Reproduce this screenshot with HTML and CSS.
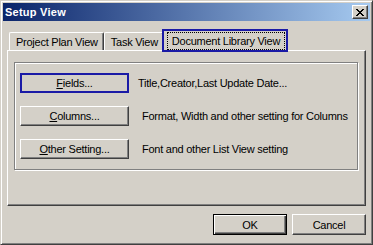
FILE: index.html
```html
<!DOCTYPE html>
<html>
  <head>
    <meta charset="UTF-8">
    <link rel="stylesheet" href="styles.css">
  </head>
  <body>
    <div class="window">
      <div class="titlebar">
        <span class="title">Setup View</span>
        <span class="close-btn">
          <svg width="8" height="7" viewBox="0 0 8 7" shape-rendering="crispEdges">
            <path fill="#000" d="M0 0h2v1h-2z M6 0h2v1h-2z M1 1h2v1h-2z M5 1h2v1h-2z M2 2h4v1h-4z M3 3h2v1h-2z M2 4h4v1h-4z M1 5h2v1h-2z M5 5h2v1h-2z M0 6h2v1h-2z M6 6h2v1h-2z"/>
          </svg>
        </span>
      </div>
      <div class="content">
        <ul class="tabs">
          <li class="tab">Project Plan View</li>
          <li class="tab">Task View</li>
          <li class="tab active"><span class="focus">Document Library View</span></li>
        </ul>
        <div class="panel">
          <div class="groupbox">
            <div class="row">
              <button class="button wide focused"><u>F</u>ields...</button>
              <span class="desc first">Title,Creator,Last Update Date...</span>
            </div>
            <div class="row">
              <button class="button wide"><u>C</u>olumns...</button>
              <span class="desc">Format, Width and other setting for Columns</span>
            </div>
            <div class="row">
              <button class="button wide"><u>O</u>ther Setting...</button>
              <span class="desc">Font and other List View setting</span>
            </div>
          </div>
        </div>
        <div class="footer">
          <button class="button small default">OK</button>
          <button class="button small">Cancel</button>
        </div>
      </div>
    </div>
  </body>
</html>
```

FILE: styles.css
```css
body {
  margin: 0;
  font-family: "Liberation Sans", Arial, sans-serif;
  font-size: 11px;
  letter-spacing: -0.25px;
  color: #000;
}

.window {
  width: 373px;
  height: 245px;
  box-sizing: border-box;
  background: #d4d0c8;
  border: 1px solid;
  border-color: #d4d0c8 #404040 #404040 #d4d0c8;
  box-shadow: inset 1px 1px #fff, inset -1px -1px #808080;
  padding: 2px;
  display: flex;
  flex-direction: column;
}

.titlebar {
  height: 18px;
  display: flex;
  align-items: center;
  justify-content: space-between;
  padding: 0 2px;
  background: linear-gradient(to right, #0a246a, #a6caf0);
}

.title {
  color: #fff;
  font-weight: bold;
  letter-spacing: 0.25px;
}

.close-btn {
  width: 16px;
  height: 14px;
  box-sizing: border-box;
  display: flex;
  align-items: center;
  justify-content: center;
  background: #d4d0c8;
  border: 1px solid;
  border-color: #fff #404040 #404040 #fff;
  box-shadow: inset -1px -1px #808080;
}

.content {
  padding: 8px 4px 0 4px;
}

.tabs {
  list-style-type: none;
  margin: 0;
  padding: 0 0 0 2px;
  height: 21px;
  display: flex;
  align-items: flex-end;
}

.tab {
  height: 18px;
  box-sizing: border-box;
  padding: 2px 5px 0 6px;
  line-height: 15px;
  border: 1px solid #fff;
  border-right-color: #404040;
  border-bottom: none;
  border-radius: 2px 2px 0 0;
  box-shadow: inset -1px 0 #808080;
  white-space: nowrap;
}

.tab.active {
  position: relative;
  z-index: 1;
  height: 23px;
  margin: 0 -2px -2px -2px;
  padding: 1px 1px 0 3px;
  line-height: normal;
  border: 2px solid #1a1aa6;
  border-radius: 0;
  box-shadow: none;
  background: #d4d0c8;
}

.focus {
  display: block;
  border: 1px dotted #000;
  padding: 0 4px;
  line-height: 16px;
}

.panel {
  height: 156px;
  box-sizing: border-box;
  padding: 11px 7px 0 6px;
  border: 1px solid;
  border-color: #fff #404040 #404040 #fff;
  box-shadow: inset -1px -1px #808080;
}

.groupbox {
  display: flex;
  flex-direction: column;
  gap: 13px;
  padding: 10px 5px;
  border: 1px solid #808080;
  box-shadow: inset 1px 1px #fff, 1px 1px #fff;
}

.row {
  display: flex;
  align-items: center;
  gap: 13px;
}

.desc {
  white-space: nowrap;
}

.desc.first {
  margin-left: -4px;
}

.button {
  box-sizing: border-box;
  padding: 0;
  font-family: inherit;
  font-size: 11px;
  letter-spacing: -0.25px;
  color: #000;
  background: #d4d0c8;
  border: 1px solid;
  border-color: #fff #404040 #404040 #fff;
  box-shadow: inset -1px -1px #808080;
}

.button.wide {
  width: 109px;
  height: 20px;
}

.button.focused {
  border: 2px solid #1a1aa6;
  box-shadow: none;
}

.button.small {
  width: 74px;
  height: 21px;
}

.button.default {
  border-color: #000;
  box-shadow: inset 1px 1px #fff, inset -1px -1px #404040, inset -2px -2px #808080;
}

.footer {
  display: flex;
  justify-content: flex-end;
  gap: 5px;
  margin-top: 8px;
}
```
